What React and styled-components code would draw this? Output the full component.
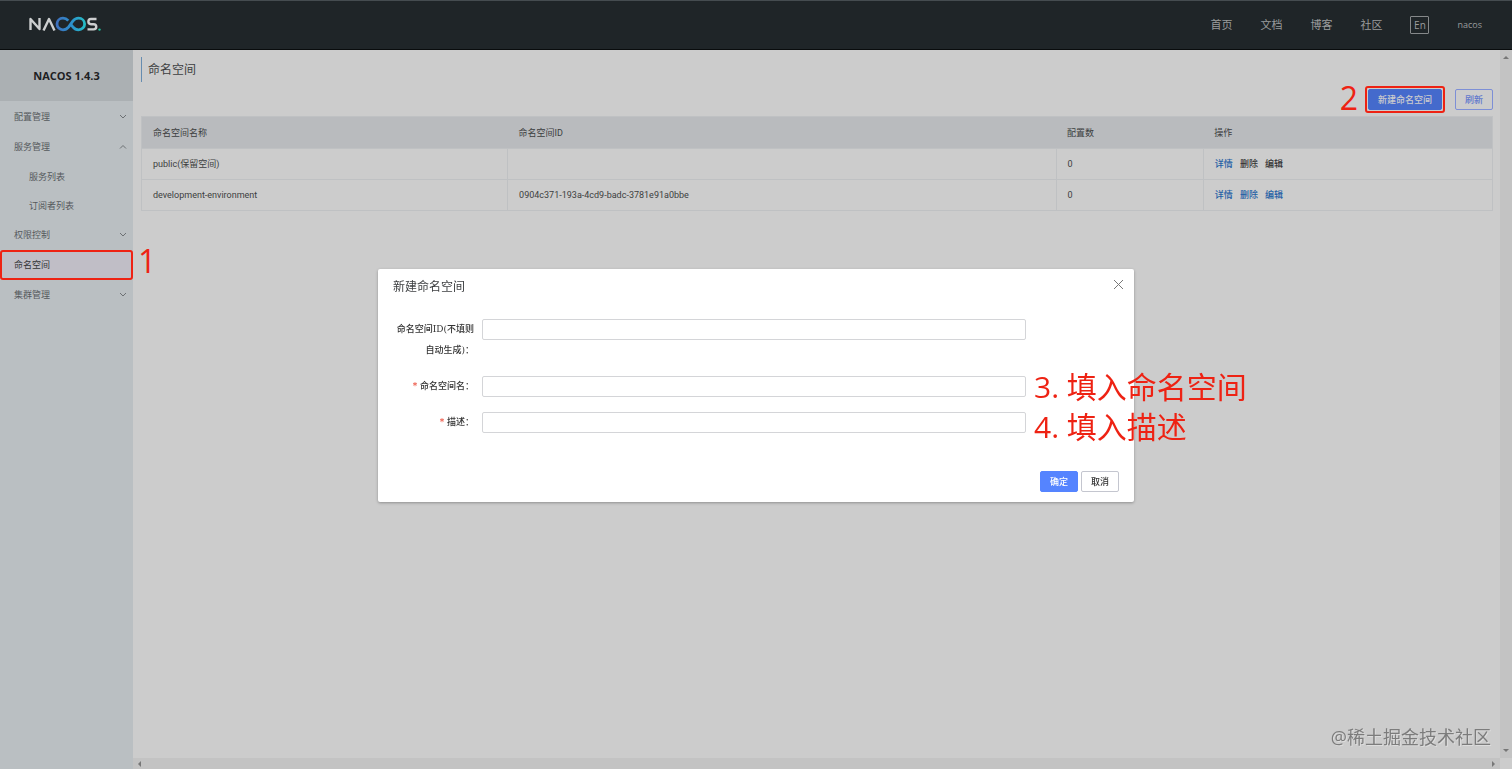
import React from 'react'
import styled, {createGlobalStyle, css} from 'styled-components'

const annotationColor = '#ee2213'
const textColor = '#3c3e40'
const primaryColor = '#5584ff'
const sansFont = '"Open Sans", "Noto Sans CJK SC", sans-serif'
const tableFont = 'Roboto, "Noto Sans CJK SC", sans-serif'

const GlobalStyle = createGlobalStyle`
  * {
    box-sizing: border-box;
  }

  body {
    margin: 0;
    background-color: #cccccc;
    color: ${textColor};
    font-family: ${sansFont};
    font-size: 9px;
    line-height: 20px;
  }

  button, input {
    font-family: inherit;
    font-size: inherit;
  }

  a {
    color: inherit;
    text-decoration: none;
  }
`

const Page = styled.div`
  display: flex;
  flex-direction: column;
  min-height: 100vh;
`

const Header = styled.header`
  display: flex;
  align-items: center;
  justify-content: space-between;
  height: 50px;
  padding: 0 30px 0 28px;
  background-color: #1f2528;
  border-top: 1px solid #454c50;
  border-bottom: 1px solid #090c0d;
`

const HeaderNav = styled.nav`
  display: flex;
  align-items: center;
  gap: 28px;
  color: #9a9c9d;
  font-size: 11px;
`

const LanguageButton = styled.button`
  width: 19px;
  height: 18px;
  padding: 0;
  border: 1px solid #85888a;
  border-radius: 1px;
  background: none;
  color: #9a9c9d;
  font-size: 10px;
  line-height: 14px;
`

const UserLink = styled.a`
  font-size: 9px;
`

const Body = styled.div`
  display: flex;
  flex: 1;
`

const Sidebar = styled.aside`
  flex: 0 0 133px;
  background-color: #babfc2;
`

const Version = styled.h1`
  margin: 0 0 1px;
  background-color: #abb0b3;
  color: #1e2123;
  font-size: 11px;
  font-weight: 700;
  line-height: 51px;
  text-align: center;
`

const Menu = styled.ul`
  margin: 0;
  padding: 0;
  list-style: none;
`

const MenuItem = styled.li`
  position: relative;
  height: ${props => props.$nested ? 29 : 30}px;
  background-color: ${props => props.$selected ? '#c0bec6' : 'transparent'};
`

const MenuLink = styled.a`
  display: flex;
  align-items: center;
  justify-content: space-between;
  height: 100%;
  padding: 0 6px 0 ${props => props.$nested ? 29 : 14}px;
  color: ${props => props.$selected ? '#333537' : '#55595c'};
`

const Marker = styled.div`
  position: absolute;
  inset: ${props => props.$inset || 0};
  border: 2px solid ${annotationColor};
  border-radius: 3px;
  pointer-events: none;
`

const Annotation = styled.span`
  position: absolute;
  color: ${annotationColor};
  font-size: ${props => props.$size}px;
  line-height: 30px;
  white-space: nowrap;
  pointer-events: none;
`

const MenuAnnotation = styled(Annotation)`
  top: -4px;
  left: calc(100% + 5px);
`

const ButtonAnnotation = styled(Annotation)`
  top: -6px;
  right: calc(100% + 10px);
`

const FieldAnnotation = styled(Annotation)`
  top: ${props => props.$top}px;
  left: calc(100% + 8px);
`

const Viewport = styled.div`
  display: grid;
  flex: 1;
  grid-template-columns: 1fr 12px;
  grid-template-rows: 1fr 11px;
`

const Content = styled.main`
  padding: 7px 7px 7px 8px;
`

const TitleBar = styled.h2`
  margin: 0 0 7px;
  padding-left: 6px;
  border-left: 1px solid #668cb0;
  font-size: 12px;
  font-weight: 400;
  line-height: 25px;
`

const Toolbar = styled.div`
  display: flex;
  justify-content: flex-end;
  gap: 13px;
  margin-bottom: 6px;
`

const ButtonSlot = styled.div`
  position: relative;
`

const Button = styled.button`
  height: 21px;
  padding: 0 9px;
  border: 1px solid #c4c6cf;
  border-radius: 2px;
  background-color: #ffffff;
  color: #333333;
  font-weight: 500;
  line-height: 18px;
  ${props => props.$primary && css`
    border-color: ${primaryColor};
    background-color: ${primaryColor};
    color: #ffffff;
  `}
`

const CreateButton = styled(Button)`
  border-color: #446acc;
  background-color: #446acc;
  color: #cccccc;
`

const RefreshButton = styled(Button)`
  border-color: #7d8fd6;
  background-color: transparent;
  color: #6078cc;
`

const Table = styled.table`
  width: 100%;
  border: 1px solid #bfc1c3;
  border-collapse: collapse;
  font-family: ${tableFont};
  line-height: 18px;
  table-layout: fixed;
`

const HeadCell = styled.th`
  width: ${props => props.$width};
  height: 32px;
  padding: 0 12px 0 11px;
  background-color: #b9bbbe;
  font-weight: 400;
  text-align: left;
`

const Cell = styled.td`
  height: 31px;
  padding: 0 12px 0 11px;
  border: 1px solid #bfc1c3;
`

const Actions = styled.div`
  display: flex;
  gap: 7px;
  font-weight: 500;
`

const ActionLink = styled.a`
  color: ${props => props.$disabled ? '#333333' : '#1f5fa5'};
`

const ScrollTrack = styled.div`
  display: flex;
  flex-direction: ${props => props.$vertical ? 'column' : 'row'};
  align-items: center;
  justify-content: space-between;
  padding: ${props => props.$vertical ? '4px 0' : '0 4px'};
  background-color: #c3c3c3;
`

const Overlay = styled.div`
  position: fixed;
  inset: 0;
  display: flex;
  align-items: center;
  justify-content: center;
  padding-top: 2px;
`

const Dialog = styled.section`
  width: 50%;
  padding: 8px 0 10px;
  border-radius: 2px;
  background-color: #ffffff;
  box-shadow: 0 1px 3px rgba(0, 0, 0, 0.3);
`

const DialogHeader = styled.header`
  display: flex;
  align-items: flex-start;
  justify-content: space-between;
  margin-bottom: 22px;
  padding: 0 10px 0 15px;
`

const DialogTitle = styled.h2`
  margin: 0;
  font-size: 12px;
  font-weight: 400;
  line-height: 20px;
`

const CloseButton = styled.button`
  display: flex;
  padding: 2px 0;
  border: 0;
  background: none;
  color: #777777;
`

const Form = styled.form`
  display: flex;
  flex-direction: column;
  gap: 15px;
  padding: 0 108px 0 15px;
`

const FormRow = styled.div`
  display: flex;
  gap: 8px;
`

const Label = styled.label`
  flex: 0 0 81px;
  color: #333333;
  font-family: "DejaVu Serif", "Noto Sans CJK SC", serif;
  font-weight: 500;
  line-height: 21px;
  text-align: right;
`

const Required = styled.span`
  color: #e8321e;
`

const Field = styled.div`
  position: relative;
  flex: 1;
`

const Input = styled.input`
  display: block;
  width: 100%;
  height: 21px;
  padding: 0 6px;
  border: 1px solid #d4d5d8;
  border-radius: 2px;
  background-color: #ffffff;
`

const DialogFooter = styled.footer`
  display: flex;
  justify-content: flex-end;
  gap: 3px;
  margin-top: 38px;
  padding: 0 15px;
`

const Watermark = styled.div`
  position: fixed;
  right: 21px;
  bottom: 20px;
  color: #7c7c7c;
  font-size: 18px;
  line-height: 24px;
  text-shadow: 1px 1px 0 #dddddd;
`

const Logo = () => (
	<svg width="74" height="18" viewBox="0 0 74 18" role="img" aria-label="NACOS.">
		<defs>
			<linearGradient id="loop" gradientUnits="userSpaceOnUse" x1="28" y1="0" x2="58" y2="0">
				<stop offset="0" stopColor="#3f6fbd"/>
				<stop offset="0.5" stopColor="#2d8fcb"/>
				<stop offset="1" stopColor="#24c0c6"/>
			</linearGradient>
		</defs>
		<path d="M2.5 14V3L11.500 13V2" fill="none" stroke="#cdcfd0" strokeWidth="2.4" strokeLinejoin="round"/>
		<path d="M15.500 14.500L21 3L26.500 14.500" fill="none" stroke="#cdcfd0" strokeWidth="2.4" strokeLinejoin="round"/>
		<path
			d="M40.300 4.600C39 3.200 37.200 2.200 35 2.200C31.500 2.200 29 4.800 29 8S31.500 13.800 35 13.800C37.500 13.800 39.200 12.700 40.700 10.800L44.800 5.200C46.300 3.300 48.200 2.200 50.500 2.200C54 2.200 56.600 4.800 56.600 8S54 13.800 50.500 13.800C48.200 13.800 46.300 12.700 44.800 10.800L42.700 8"
			fill="none" stroke="url(#loop)" strokeWidth="2.800"/>
		<path
			d="M68.500 3H63C59.500 3 59.500 8.200 63 8.200H65.500C69.200 8.200 69.200 13.400 65.500 13.400H59.500"
			fill="none" stroke="#cdcfd0" strokeWidth="2.400"/>
		<circle cx="71.500" cy="13.600" r="1.200" fill="#22c3a0"/>
	</svg>
)

const Chevron = ({up}) => (
	<svg width="8" height="6" viewBox="0 0 8 6" fill="none" stroke="#6c7073" aria-hidden="true">
		<path d={up ? 'M1 4.500L4 1.500L7 4.500' : 'M1 1L4 4L7 1'}/>
	</svg>
)

const arrowPaths = {
	up: 'M0 5L3 2L6 5Z',
	down: 'M0 1L3 4L6 1Z',
	left: 'M4 0L1 3L4 6Z',
	right: 'M2 0L5 3L2 6Z'
}

const ScrollArrow = ({direction}) => (
	<svg width="6" height="6" viewBox="0 0 6 6" fill="#777777" aria-hidden="true">
		<path d={arrowPaths[direction]}/>
	</svg>
)

const menuItems = [
	{label: '配置管理', icon: 'down'},
	{label: '服务管理', icon: 'up'},
	{label: '服务列表', nested: true},
	{label: '订阅者列表', nested: true},
	{label: '权限控制', icon: 'down'},
	{label: '命名空间', selected: true},
	{label: '集群管理', icon: 'down'}
]

const namespaces = [
	{name: 'public(保留空间)', id: '', count: 0, reserved: true},
	{name: 'development-environment', id: '0904c371-193a-4cd9-badc-3781e91a0bbe', count: 0}
]

const SideMenu = () => (
	<Sidebar>
		<Version>NACOS 1.4.3</Version>
		<Menu>
			{menuItems.map(({label, icon, nested, selected}) => (
				<MenuItem key={label} $nested={nested} $selected={selected}>
					<MenuLink href="#" $nested={nested} $selected={selected}>
						{label}
						{icon && <Chevron up={icon === 'up'}/>}
					</MenuLink>
					{selected && <><Marker/><MenuAnnotation $size={32}>1</MenuAnnotation></>}
				</MenuItem>
			))}
		</Menu>
	</Sidebar>
)

const NamespaceTable = () => (
	<Table>
		<thead>
			<tr>
				<HeadCell $width="27.1%">命名空间名称</HeadCell>
				<HeadCell $width="40.6%">命名空间ID</HeadCell>
				<HeadCell $width="10.9%">配置数</HeadCell>
				<HeadCell>操作</HeadCell>
			</tr>
		</thead>
		<tbody>
			{namespaces.map(({name, id, count, reserved}) => (
				<tr key={name}>
					<Cell>{name}</Cell>
					<Cell>{id}</Cell>
					<Cell>{count}</Cell>
					<Cell>
						<Actions>
							<ActionLink href="#">详情</ActionLink>
							<ActionLink href="#" $disabled={reserved}>删除</ActionLink>
							<ActionLink href="#" $disabled={reserved}>编辑</ActionLink>
						</Actions>
					</Cell>
				</tr>
			))}
		</tbody>
	</Table>
)

const NamespaceDialog = () => (
	<Overlay>
		<Dialog role="dialog" aria-labelledby="dialog-title">
			<DialogHeader>
				<DialogTitle id="dialog-title">新建命名空间</DialogTitle>
				<CloseButton type="button" aria-label="关闭">
					<svg width="11" height="11" viewBox="0 0 11 11" fill="none" stroke="currentColor">
						<path d="M1 1L10 10M10 1L1 10"/>
					</svg>
				</CloseButton>
			</DialogHeader>
			<Form id="namespace-form">
				<FormRow>
					<Label htmlFor="namespace-id">命名空间ID(不填则自动生成)：</Label>
					<Field><Input id="namespace-id"/></Field>
				</FormRow>
				<FormRow>
					<Label htmlFor="namespace-name"><Required>*</Required> 命名空间名：</Label>
					<Field>
						<Input id="namespace-name"/>
						<FieldAnnotation $size={30} $top={-4}>3. 填入命名空间</FieldAnnotation>
					</Field>
				</FormRow>
				<FormRow>
					<Label htmlFor="namespace-desc"><Required>*</Required> 描述：</Label>
					<Field>
						<Input id="namespace-desc"/>
						<FieldAnnotation $size={30} $top={0}>4. 填入描述</FieldAnnotation>
					</Field>
				</FormRow>
			</Form>
			<DialogFooter>
				<Button type="submit" form="namespace-form" $primary>确定</Button>
				<Button type="button">取消</Button>
			</DialogFooter>
		</Dialog>
	</Overlay>
)

const App = () => (
	<>
		<GlobalStyle/>
		<Page>
			<Header>
				<Logo/>
				<HeaderNav>
					<a href="#">首页</a>
					<a href="#">文档</a>
					<a href="#">博客</a>
					<a href="#">社区</a>
					<LanguageButton type="button">En</LanguageButton>
					<UserLink href="#">nacos</UserLink>
				</HeaderNav>
			</Header>
			<Body>
				<SideMenu/>
				<Viewport>
					<Content>
						<TitleBar>命名空间</TitleBar>
						<Toolbar>
							<ButtonSlot>
								<CreateButton type="button">新建命名空间</CreateButton>
								<Marker $inset="-3px"/>
								<ButtonAnnotation $size={32}>2</ButtonAnnotation>
							</ButtonSlot>
							<RefreshButton type="button">刷新</RefreshButton>
						</Toolbar>
						<NamespaceTable/>
					</Content>
					<ScrollTrack $vertical>
						<ScrollArrow direction="up"/>
						<ScrollArrow direction="down"/>
					</ScrollTrack>
					<ScrollTrack>
						<ScrollArrow direction="left"/>
						<ScrollArrow direction="right"/>
					</ScrollTrack>
				</Viewport>
			</Body>
		</Page>
		<NamespaceDialog/>
		<Watermark>@稀土掘金技术社区</Watermark>
	</>
)

export default App
